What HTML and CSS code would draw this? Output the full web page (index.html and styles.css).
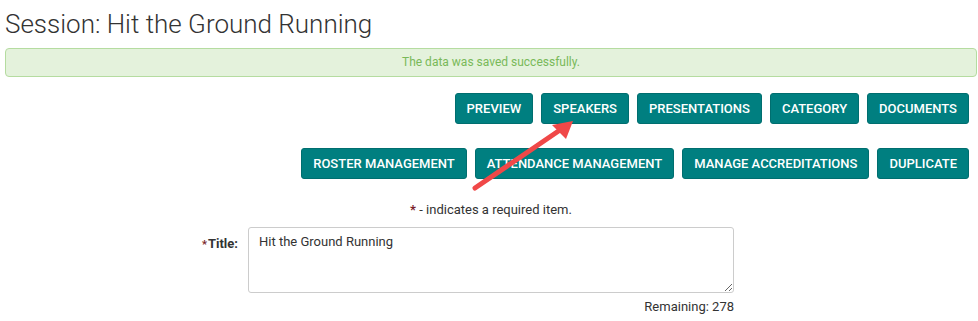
FILE: index.html
```html
<!DOCTYPE html>
<html>
<head>
<meta charset="utf-8">
<link rel="stylesheet" href="styles.css">
</head>
<body>
<div class="page">
  <h1 class="title">Session: Hit the Ground Running</h1>
  <div class="alert">The data was saved successfully.</div>
  <div class="btn-row row1">
    <button class="btn">Preview</button>
    <button class="btn">Speakers</button>
    <button class="btn">Presentations</button>
    <button class="btn">Category</button>
    <button class="btn">Documents</button>
  </div>
  <div class="btn-row row2">
    <button class="btn">Roster Management</button>
    <button class="btn">Attendance Management</button>
    <button class="btn">Manage Accreditations</button>
    <button class="btn">Duplicate</button>
  </div>
  <p class="required-note"><span class="req">*</span> - indicates a required item.</p>
  <div class="form-row">
    <label class="label"><span class="req small">*</span>Title:</label>
    <div class="field">
      <textarea class="textarea">Hit the Ground Running</textarea>
      <div class="remaining">Remaining: 278</div>
    </div>
  </div>
  <svg class="arrow" width="978" height="321" viewBox="0 0 978 321">
    <line x1="475" y1="188" x2="560" y2="130" stroke="#f04848" stroke-width="5" stroke-linecap="round"/>
    <polygon points="573,121 552,125 566,139" fill="#f04848"/>
  </svg>
</div>
</body>
</html>
```

FILE: styles.css
```css
* { box-sizing: border-box; }
html, body { margin: 0; padding: 0; background: #fff; }
body { font-family: Roboto, "Liberation Sans", sans-serif; color: #333; }
.page { position: relative; width: 978px; height: 321px; padding: 0 1px 0 5px; overflow: hidden; }
.title { margin: 0; padding-top: 8px; font-size: 26px; font-weight: 300; line-height: 32px; color: #333; height: 48px; }
.alert {
  height: 29px; border: 1px solid #b5dca0; background: #e4f2dc; border-radius: 4px;
  color: #79b959; font-size: 12px; text-align: center; line-height: 27px;
}
.btn-row { display: flex; justify-content: flex-end; gap: 8px; padding-right: 8px; }
.row1 { margin-top: 16px; }
.row2 { margin-top: 24px; }
.btn {
  margin: 0;
  font-family: Roboto, "Liberation Sans", sans-serif; font-size: 13px; font-weight: 500;
  text-transform: uppercase; color: #fff; background: #007f80; border: 1px solid #006e6f;
  border-radius: 3px; height: 31px; padding: 0 11px; line-height: 29px; cursor: pointer;
}
.required-note { margin: 23px 0 0; font-size: 13px; text-align: center; line-height: 16px; color: #333; }
.req { color: #7a1f2a; font-weight: 700; }
.req.small { font-size: 11px; margin-right: 1px; }
.form-row { display: grid; grid-template-columns: 233px 486px; column-gap: 10px; margin-top: 9px; }
.label { text-align: right; font-size: 13px; font-weight: 700; padding-top: 9px; color: #333; }
.textarea {
  display: block; width: 486px; height: 66px; border: 1px solid #ccc; border-radius: 3px;
  font-family: Roboto, "Liberation Sans", sans-serif; font-size: 13px; color: #333;
  padding: 6px 10px; resize: vertical; line-height: 16px;
}
.remaining { text-align: right; font-size: 13px; margin-top: 6px; color: #333; }
.arrow { position: absolute; left: 0; top: 0; pointer-events: none; }
```
